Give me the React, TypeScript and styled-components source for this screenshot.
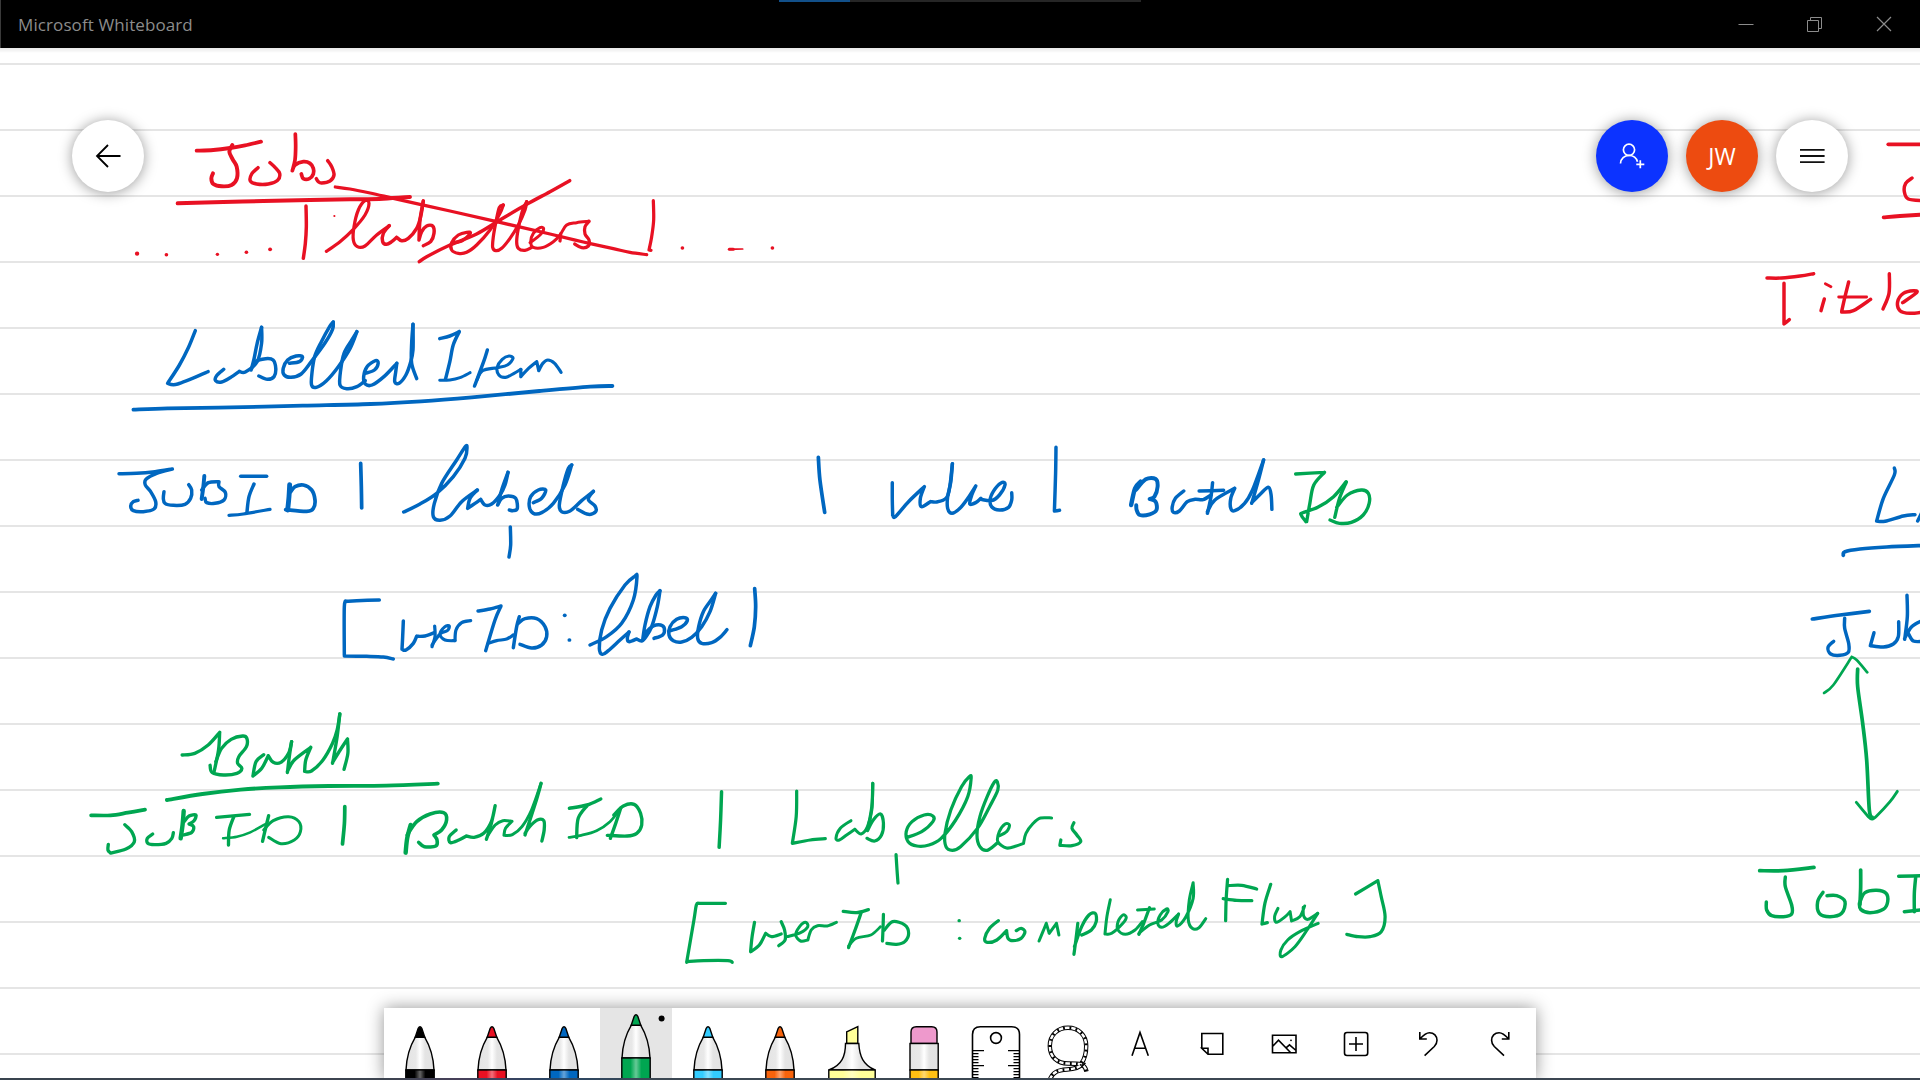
import React from "react";
import styled, { createGlobalStyle } from "styled-components";

const GlobalStyle = createGlobalStyle`
  * { box-sizing: border-box; }
  html, body { margin: 0; padding: 0; background: #fff; overflow: hidden; }
`;

const Window = styled.div`
  position: relative;
  display: flex;
  flex-direction: column;
  width: 1920px;
  height: 1080px;
  overflow: hidden;
  background: #fff;
  font-family: "Open Sans", "Noto Sans", sans-serif;
`;

const TitleBar = styled.header`
  display: flex;
  flex: 0 0 48px;
  align-items: center;
  justify-content: space-between;
  padding: 0 2px 0 17px;
  background: #000;
  border-left: 1px solid #3a3a3a;
  color: #8c8c8c;
`;

const Title = styled.span`
  padding-top: 1px;
  font-size: 17px;
  letter-spacing: 0.1px;
  line-height: 47px;
  white-space: nowrap;
`;

const Progress = styled.div`
  position: absolute;
  top: 0;
  left: 779px;
  width: 362px;
  height: 2px;
  background: linear-gradient(90deg, #12508a 0 71px, #262626 71px 100%);
`;

const WindowControls = styled.div`
  display: flex;
`;

const ControlButton = styled.button`
  display: flex;
  align-items: center;
  justify-content: center;
  width: 69px;
  height: 48px;
  padding: 0;
  border: 0;
  background: transparent;
  color: #8c8c8c;
`;

const Board = styled.main`
  position: relative;
  display: flex;
  flex: 1;
  flex-direction: column;
  justify-content: space-between;
  background:
    linear-gradient(180deg, rgba(0, 0, 0, 0.09), transparent) 0 0 / 100% 5px no-repeat,
    repeating-linear-gradient(180deg, transparent 0 15px, #e5e5e5 15px 17px, transparent 17px 66px);
`;

const Ink = styled.svg`
  position: absolute;
  left: 0;
  top: -48px;
  width: 1920px;
  height: 1080px;
  fill: none;
  stroke-linecap: round;
  stroke-linejoin: round;
`;

const FloatingRow = styled.div`
  position: relative;
  display: flex;
  justify-content: space-between;
  padding: 72px 72px 0;
`;

const ButtonGroup = styled.div`
  display: flex;
  gap: 18px;
`;

const RoundButton = styled.button<{ $bg: string; $fg: string }>`
  display: flex;
  align-items: center;
  justify-content: center;
  width: 72px;
  height: 72px;
  padding: 0;
  border: 0;
  border-radius: 50%;
  background: ${(p) => p.$bg};
  color: ${(p) => p.$fg};
  box-shadow: 0 1px 14px rgba(0, 0, 0, 0.4);
  font: 500 23px "Open Sans", "Noto Sans", sans-serif;
`;

const Toolbar = styled.div`
  position: relative;
  display: flex;
  align-self: flex-start;
  margin-left: 384px;
  height: 72px;
  background: #fff;
  box-shadow: 0 0 16px rgba(0, 0, 0, 0.42);
`;

const Tool = styled.button<{ $active?: boolean }>`
  width: 72px;
  height: 72px;
  padding: 0;
  border: 0;
  background: ${(p) => (p.$active ? "#e5e5e5" : "transparent")};
`;

const ToolIcon = styled.svg<{ $weight?: number }>`
  display: block;
  width: 72px;
  height: 72px;
  fill: none;
  stroke: #000;
  stroke-width: ${(p) => p.$weight ?? 1.6};
`;

const ScreenEdge = styled.div`
  position: absolute;
  left: 0;
  bottom: 0;
  width: 100%;
  height: 2px;
  background: linear-gradient(90deg, #39444f 0, #3d4450 20%, #47405a 24%, #2a4766 29%, #3c4853 34%, #3c4652 100%);
`;

const RED = "#e81123";
const BLUE = "#0067c0";
const GREEN = "#00a651";

type Stroke = [string, number?];
interface Note {
  color: string;
  x: number;
  y: number;
  sx: number;
  sy: number;
  width: number;
  strokes: Stroke[];
}

const K = 1568;
const PEN_PRESSURE = 1.16;

const notes: Note[] = [
  {
    color: RED, x: 50, y: 100, sx: 3, sy: 3, width: 3,
    strokes: [
      ["440,152 490,150 540,144 585,136 633,125", 3.3],
      ["547,135 538,155 548,178 560,200 561,235 545,255 515,259 490,252 484,235 489,220", 3.4],
      ["624,203 605,222 601,243 620,252 655,252 683,241 689,220 675,202 660,188", 3],
      ["736,102 737,140 735,180 727,212; 727,212 735,195 760,185 780,190 790,205 790,222 778,236 760,236 754,222", 3.2],
      ["833,182 845,200 852,225 840,243 815,249 805,245 799,236", 3],
      ["856,261 900,267 960,279 1030,295 1110,313 1200,333 1340,365 1500,402 1600,426 1690,446 1740,457 1790,464", 2.8],
      ["383,310 520,306 640,303 780,300 900,298 1000,296 1080,291", 3.4],
      ["768,318 769,380 766,430 760,475", 3],
      ["261,461 261.5,461", 3.6], ["349,464 349.5,464", 3], ["502,463 502.5,463", 2.8], ["589,457 589.5,457", 3], ["660,448 660.5,448", 3.2], ["853,348 853.3,348", 1.8],
      ["829,454 870,425 910,388 945,345 957,310 945,302 925,330 912,380 910,420 922,440 945,438 980,405 1018,377", 2.8],
      ["1018,377 1000,400 998,425 1010,433 1025,425 1040,412; 1040,412 1055,422 1075,415 1100,385 1112,350 1120,303"],
      ["1120,303 1110,360 1107,420; 1107,420 1115,395 1130,378 1148,378 1152,400 1142,425 1120,437"],
    ],
  },
  {
    color: RED, x: 400, y: 160, sx: 3, sy: 3, width: 2.8,
    strokes: [
      ["155,248 185,243 211,220 200,217 175,225 155,248 155,270 175,280 200,277 230,255 270,210 300,160 310,135"],
      ["310,135 298,142 288,185 280,230 278,262 288,272 305,265 330,235 355,195 375,150 380,125"],
      ["380,125 368,150 355,205 350,245 355,265 375,271 395,262"],
      ["390,248 420,225 431,206 420,203 400,220 392,245 400,262 430,262 460,245 480,225 500,195 530,188 567,184", 2.6],
      ["480,243 482,222"],
      ["567,184 555,200 555,222 567,240 565,258 545,263 524,252"],
      ["58,305 80,290 150,255 230,222 300,180 380,133 450,95 509,62", 3],
      ["760,122 761,180 755,230 747,270; 747,270 753,271"],
      ["847,264 847.5,264", 3], ["1117,264 1117.5,264", 3], ["988,268 1028,267", 1.5], ["988,268 1000,268", 2.6],
    ],
  },
  {
    color: BLUE, x: 100, y: 310, sx: K / 530, sy: 3, width: 3,
    strokes: [
      ["282,62 262,112 235,165 200,220; 200,220 230,222 320,185"],
      ["366,178 345,197 342,212 360,216 385,203 412,184; 412,184 430,186 465,155 478,100 478,52"],
      ["478,52 465,100 455,150 447,180; 447,180 460,155 490,146 512,150 520,175 515,200 495,208 470,198"],
      ["560,160 590,155 599,140 580,138 555,150 542,175 545,195 565,202 595,192 625,155 665,100 688,58 690,36"],
      ["690,36 678,52 655,95 635,140 627,190 626,225 640,232 670,212 705,170 740,115 760,65"],
      ["760,65 745,90 722,130 712,180 710,225 730,236 760,230 785,212"],
      ["785,190 812,180 823,160 815,152 790,170 780,200 785,222 805,225 840,200 878,160"],
      ["878,160 875,185 872,215 885,220 905,195 918,160 926,120 926,43"],
      ["926,43 922,100 922,160 937,206"],
      ["1005,86 1035,78 1063,65; 1063,65 1045,105 1035,155 1022,208"],
      ["1005,211 1035,210 1065,203 1095,188", 2.6],
      ["1146,120 1135,155 1108,228"],
      ["1115,210 1132,182 1175,173 1205,165 1222,145 1210,138 1190,148 1175,172 1180,195 1200,202 1225,190 1245,178", 2.7],
      ["1245,178 1245,200; 1245,200 1265,178 1292,155; 1292,155 1298,182; 1298,182 1310,160 1325,150 1345,160 1364,187", 2.8],
      ["99,299 200,295 350,293 600,287 800,282 950,274 1100,262 1300,243 1450,230 1516,228", 3.3],
    ],
  },
  {
    color: BLUE, x: 100, y: 430, sx: 3, sy: 3, width: 3,
    strokes: [
      ["57,131 110,130 165,125 217,117; 217,117 170,130 138,148 136,165 152,185 167,215 162,237 130,245 100,242 92,228 100,215 114,211"],
      ["192,185 190,205 195,220 220,226 255,223 272,205 275,180 266,164"],
      ["313,138 310,170 305,207", 3.4],
      ["305,180 325,158 357,155; 357,155 357,170 376,187 372,210 345,220 320,218 315,205"],
      ["422,139 500,139"], ["462,162 447,200 441,245"], ["387,256 430,252 510,238", 2.8],
      ["569,164 567,200 563,240", 4.2], ["572,185 585,170 610,165 635,180 645,210 640,235 620,244 557,239", 3.2],
      ["782,100 784,170 785,234", 3.2],
      ["911,246 960,222 1010,190 1060,140 1095,85 1101,52 1096,50 1070,90 1025,160 1003,220 1000,260 1020,271 1050,258 1085,215 1132,180"],
      ["1132,180 1110,205 1103,235; 1103,235 1125,220 1142,208; 1142,208 1155,225 1175,222 1200,195 1215,165 1224,127"],
      ["1224,127 1205,180 1193,225; 1193,225 1205,205 1225,198 1247,205 1252,235 1240,242 1228,240"],
      ["1300,218 1325,205 1337,180 1315,180 1292,200 1288,230 1300,250 1325,248 1360,220 1395,165 1415,105"],
      ["1415,105 1405,115 1390,165 1378,225 1385,245 1410,243 1445,212 1480,184"],
      ["1480,184 1465,208 1485,228 1487,245 1465,253 1433,238"],
      ["1231,291 1232,345 1227,381"],
      ["838,510 770,512 740,514; 740,514 733,530 733,676; 733,678 800,679 850,681 880,687"],
      ["910,573 908,620 906,658; 906,658 918,660 940,640 950,619; 950,619 975,618 1003,608"],
      ["1004,588 1005,620 996,650", 2.8], ["996,645 1020,612 1042,602 1048,588 1035,590 1020,612 1035,630 1065,632", 2.7],
      ["1065,632 1068,600 1085,578 1112,572", 2.8],
      ["1134,543 1170,537 1203,528; 1203,528 1185,570 1157,662"], ["1165,640 1190,632 1220,627 1240,615", 2.8],
      ["1258,560 1250,590 1240,653"], ["1255,580 1275,566 1310,566 1335,590 1340,620 1325,645 1295,654 1260,643"],
      ["1394,556 1394.5,556", 3.2], ["1408,630 1408.5,630", 3.2],
    ],
  },
  {
    color: BLUE, x: 570, y: 560, sx: 3, sy: 3, width: 3,
    strokes: [
      ["60,255 110,230 155,190 190,120 201,50 194,49 165,75 120,145 95,210 88,265 97,283 115,272 150,240 177,216"],
      ["177,216 172,235 178,245 200,237; 200,237 215,243 228,230 245,200 262,140 270,92"],
      ["270,92 258,105 240,140 225,195 218,240; 218,240 230,215 250,198 272,195 283,205 278,225 252,235"],
      ["302,212 335,200 352,182 345,173 320,178 300,200 297,225 310,242 335,246 365,232 395,200 420,155 437,100"],
      ["437,100 425,118 400,155 386,200 383,235 395,250 425,248 450,232 471,209"],
      ["554,86 557,140 553,200 541,257", 3.2],
    ],
  },
  {
    color: BLUE, x: 780, y: 430, sx: K / 620, sy: 3, width: 3,
    strokes: [
      ["97,82 101,150 113,247", 3.2],
      ["284,158 284,210 285,255; 285,255 292,260 325,215 365,170; 365,170 355,205 358,230 380,215; 380,215 400,215 425,195 436,101"],
      ["436,101 432,155 424,200 424,235 435,250 455,235 475,205 495,168; 495,168 485,195 480,222 495,218 508,205"],
      ["508,208 535,212 555,195 569,165 562,157 545,175 532,205 535,230 555,240 578,232 586,210 586,188"],
      ["698,52 697,130 694,243; 694,243 707,241"],
      ["912,155 898,175 888,225", 3.8], ["900,180 925,148 950,147 955,170 947,200 935,207; 935,207 950,215 952,240 935,253 910,255 902,240 901,226", 3.4],
      ["1021,183 1000,205 992,230 995,247 1010,243 1030,215 1050,208 1070,209 1090,195"],
      ["1094,158 1090,200 1081,250"], ["1060,183 1122,181"], ["1081,245 1100,210 1150,175; 1150,175 1140,205 1140,235 1150,242 1175,220 1195,180 1223,90"],
      ["1223,90 1210,150 1193,220; 1193,218 1215,192 1235,172 1242,195 1244,238"],
    ],
  },
  {
    color: GREEN, x: 780, y: 430, sx: K / 620, sy: 3, width: 2.9,
    strokes: [
      ["1304,132 1377,127; 1377,127 1350,165 1340,220 1332,275; 1330,275 1318,255 1322,248 1360,232 1400,200 1432,155"],
      ["1432,157 1415,205 1403,262; 1408,232 1435,195 1470,180 1488,190 1490,220 1475,255 1445,277 1415,280 1391,270"],
    ],
  },
  {
    color: GREEN, x: 80, y: 700, sx: K / 600, sy: 3, width: 2.9,
    strokes: [
      ["267,165 300,160 335,135 365,97; 365,97 362,150 350,217"],
      ["340,196 345,217 375,225 410,220 423,205 412,190 415,170 435,140 436,115 425,108 395,118 370,145 355,185"],
      ["480,164 460,185 452,228; 452,228 475,205 492,167; 492,167 505,187 525,187 545,160 553,125"],
      ["553,125 547,170 542,218; 542,214 560,180 603,142; 603,142 590,180 587,214; 587,214 605,213 635,180 660,130 672,90 679,42"],
      ["679,42 672,110 660,190; 660,187 680,150 699,117; 699,117 700,160 690,208"],
      ["227,300 320,282 420,269 520,262 650,258 800,257 935,251", 3.3],
      ["29,346 80,346 125,338 170,329", 3.2],
      ["117,374 135,395 142,425 120,447 80,459; 80,459 73,450 74,433"],
      ["190,402 176,415 177,430 195,434 225,430 240,415 244,398"],
      ["271,333 268,375 263,415", 3.8], ["272,365 285,348 303,345 298,362 285,372; 285,372 297,380 292,397 270,405"],
      ["357,352 443,343"], ["402,350 390,390 388,435"], ["374,415 410,410 445,397 485,372", 2.2],
      ["493,347 485,385 477,424"], ["480,390 505,362 545,350 572,365 576,395 560,420 525,431 493,412", 2.6],
      ["692,320 691,370 686,432", 3.2],
      ["864,375 855,415 851,458", 3.8], ["855,405 880,365 915,342 950,338 958,360 945,390 925,405; 925,405 933,420 930,438 900,440 885,427", 3.1],
      ["983,390 965,410 968,428 990,420 1010,408; 1010,408 1030,412 1055,400 1075,365 1085,317; 1085,317 1075,370 1062,418"],
      ["1065,408 1085,375 1105,362 1129,364; 1129,364 1112,385 1108,406; 1108,406 1130,404 1155,380 1180,330 1205,250", 2.6],
      ["1205,250 1190,310 1163,405; 1163,400 1175,380 1195,360 1212,362 1213,390 1207,423"],
      ["1279,325 1325,315 1361,297", 3], ["1325,317 1302,355 1298,413"], ["1278,412 1310,406 1350,392 1385,365 1413,325", 2.4],
      ["1413,325 1400,370 1386,415"], ["1395,345 1420,318 1448,313 1465,340 1468,375 1455,400 1430,408 1378,406"],
    ],
  },
  {
    color: GREEN, x: 660, y: 760, sx: K / 760, sy: 3, width: 2.8,
    strokes: [
      ["127,95 125,180 122,262", 3],
      ["282,93 281,170 273,250; 273,250 310,240 341,236"],
      ["394,182 372,205 363,235 370,240 385,225 402,208; 402,208 415,222 428,200 437,150 439,70", 2.6],
      ["439,70 437,140 428,212; 428,212 440,180 455,162 461,190 457,225 443,243 427,235"],
      ["508,233 540,215 563,185 563,168 545,165 520,185 508,215 512,245 530,258 555,255 580,235 610,180 635,110 642,54 638,50 622,80 600,150 588,220 590,260 603,271 620,260 655,205 680,140 697,90 696,66 690,66 675,110 660,170 654,225 660,260 675,271 695,250"],
      ["697,230 715,215 721,195 712,192 700,215 697,245 715,264 735,258 750,250; 750,250 755,220 770,190 785,174 808,174", 2.6],
      ["854,188 850,205 860,225 868,245 850,257 825,256; 825,256 827,240"],
      ["487,284 489,330 491,369"],
      ["135,430 80,430; 80,430 75,435 70,480 55,607; 55,605 90,602 140,602 149,607"],
      ["195,487 190,530 187,572; 187,575 205,555 218,520; 218,520 230,530 250,522"],
      ["250,485 257,510 258,540 245,557"],
      ["262,530 290,518 305,500 300,487 288,500 280,525 290,543 305,540; 305,540 312,510 325,497 345,498 364,487", 2.6],
      ["378,454 405,458 430,449"], ["415,458 405,500 389,563"], ["389,558 405,535 435,525 455,500", 2.4],
      ["461,463 460,510 459,543"], ["463,510 480,485 505,495 513,520 505,545 488,553 468,550"],
      ["617,482 617.5,482", 2.8], ["618,535 618.5,535", 2.8],
      ["698,482 680,505 670,535 675,547 695,540 715,512; 715,512 718,535 728,542 745,535 753,515 745,505 735,512"],
      ["782,543 790,515 797,490; 797,490 803,520; 803,520 818,490; 818,490 823,525", 2.6],
      ["862,490 858,540 854,583; 855,560 870,500 885,465 898,460 900,485 890,510 870,525"],
      ["929,419 922,470 918,522; 918,522 932,520 955,490 962,472 955,465 945,485 945,510 960,523 980,510 995,485", 2.6],
      ["1010,443 998,490 988,523"], ["985,450 1020,447", 2.4],
      ["988,520 1010,495 1035,480 1048,455 1045,447 1032,465 1027,490 1035,502 1050,490 1070,462", 2.6],
      ["1070,462 1065,485 1068,498 1085,470 1100,415 1100,368; 1100,368 1092,420 1090,480 1098,505 1112,503 1126,476", 2.6],
      ["1171,358 1168,420 1167,482"], ["1171,377 1200,376 1231,387"], ["1162,416 1190,421 1221,422"],
      ["1260,373 1248,430 1242,492; 1242,492 1253,488"],
      ["1275,445 1268,470 1272,487 1290,470 1300,455; 1300,455 1303,483; 1303,483 1320,470 1330,438; 1327,442 1328,468 1337,478 1357,460", 2.6],
      ["1357,460 1335,510 1310,560 1283,590 1281,570 1295,540 1320,515 1358,490", 2.6],
      ["1435,402 1481,362; 1481,362 1488,410 1496,470 1488,515 1465,530 1440,530 1417,523"],
    ],
  },
  {
    color: RED, x: 1560, y: 100, sx: 3, sy: 3, width: 3,
    strokes: [
      ["985,133 1100,133", 3.3], ["1056,234 1037,250 1033,275 1045,297 1090,302"], ["971,352 1020,348 1100,343", 3.3],
      ["621,534 665,534 720,528 761,521"], ["672,550 672,610 672,670; 672,672 688,659"],
      ["793,597 783,632"], ["796,551 813,560", 2.4],
      ["866,546 855,590 845,634; 845,636 880,632 932,598"], ["836,591 920,591", 2.4],
      ["988,521 987,580 969,627"],
      ["1028,608 1070,578 1060,572 1030,580 1013,605 1020,632 1050,640 1090,636"],
    ],
  },
  {
    color: BLUE, x: 1740, y: 440, sx: 3, sy: 3, width: 3,
    strokes: [
      ["463,84 463,105 430,175 410,243; 410,243 435,244 490,228 525,224"], ["550,208 533,243"],
      ["310,346 315,335 360,327 440,321 560,316", 3.2],
      ["217,537 300,525 388,514", 3.2], ["314,535 314,565 326,610 325,637 300,646 272,642 264,622 281,604"],
      ["402,578 391,617; 391,617 430,621 460,612 475,590 476,545"],
      ["501,466 502,530 494,598; 494,595 515,560 550,540"], ["505,580 520,603 550,604"],
    ],
  },
  {
    color: GREEN, x: 1740, y: 440, sx: 3, sy: 3, width: 3,
    strokes: [
      ["252,759 280,735 335,651; 335,651 350,660 382,697", 2.3],
      ["353,687 353,740 368,850 380,960 388,1110 397,1132", 3.2],
      ["349,1087 385,1130 397,1137 410,1128 450,1085 472,1054", 2.5],
      ["59,1292 130,1292 222,1282", 3.2], ["136,1311 136,1340 155,1395 155,1422 130,1430 95,1427 80,1410 79,1386"],
      ["249,1357 233,1385 238,1420 270,1430 305,1420 315,1385 290,1367 261,1367"],
      ["362,1290 362,1340 360,1393", 3.2], ["360,1385 375,1358 410,1351 438,1360 443,1385 430,1408 390,1418 362,1408 358,1390"],
      ["476,1309 560,1307"], ["527,1312 523,1360 523,1415"], ["493,1415 560,1408"],
    ],
  },
];

// Runs a smooth curve through the sampled pen positions; ";" marks a sharp turn.
function inkPath(points: string, n: Note): string {
  return points
    .split(";")
    .map((part) => {
      const p = part.trim().split(" ").map((s) => {
        const [a, b] = s.split(",").map(Number);
        return [n.x + a / n.sx, n.y + b / n.sy];
      });
      let d = `M${p[0][0].toFixed(2)} ${p[0][1].toFixed(2)}`;
      for (let i = 0; i < p.length - 1; i++) {
        const p0 = p[Math.max(0, i - 1)];
        const p1 = p[i];
        const p2 = p[i + 1];
        const p3 = p[Math.min(p.length - 1, i + 2)];
        const c = [
          p1[0] + (p2[0] - p0[0]) / 6, p1[1] + (p2[1] - p0[1]) / 6,
          p2[0] - (p3[0] - p1[0]) / 6, p2[1] - (p3[1] - p1[1]) / 6,
          p2[0], p2[1],
        ];
        d += "C" + c.map((v) => v.toFixed(2)).join(" ");
      }
      return d;
    })
    .join("");
}

function Handwriting() {
  return (
    <Ink viewBox="0 0 1920 1080">
      {notes.map((n, i) => (
        <g key={i} stroke={n.color}>
          {n.strokes.map(([pts, w], j) => (
            <path key={j} d={inkPath(pts, n)} strokeWidth={(w ?? n.width) * PEN_PRESSURE} />
          ))}
        </g>
      ))}
    </Ink>
  );
}

function Gradients() {
  return (
    <defs>
      <linearGradient id="barrel">
        <stop offset="0" stopColor="#e4e4e4" />
        <stop offset="0.35" stopColor="#e8e8e8" />
        <stop offset="0.5" stopColor="#fff" />
        <stop offset="0.68" stopColor="#e4e4e4" />
        <stop offset="1" stopColor="#e2e2e2" />
      </linearGradient>
      <linearGradient id="shine">
        <stop offset="0.3" stopColor="#fff" stopOpacity="0" />
        <stop offset="0.5" stopColor="#fff" stopOpacity="0.4" />
        <stop offset="0.7" stopColor="#fff" stopOpacity="0" />
      </linearGradient>
    </defs>
  );
}

function Pen({ color, active }: { color: string; active?: boolean }) {
  return (
    <Tool $active={active}>
      <ToolIcon viewBox="0 0 72 72">
        <Gradients />
        <g transform={active ? "translate(0 -12)" : undefined} strokeWidth="1.4">
          <path d="M31.2 29.3C26 38 22.5 50 22 62H50C49.5 50 46 38 40.8 29.3Z" fill="url(#barrel)" />
          <path d="M31.2 29.3L34.2 20.4Q36 17.2 37.8 20.4L40.8 29.3Z" fill={color} />
          <rect x="21.8" y="62" width="28.4" height="30" fill={color} />
          <rect x="22.4" y="62.6" width="27.2" height="29" fill="url(#shine)" stroke="none" />
        </g>
        {active && <circle cx="61.6" cy="10.6" r="3" fill="#000" stroke="none" />}
      </ToolIcon>
    </Tool>
  );
}

function Ruler() {
  const ticks = [0, 1, 2, 3, 4, 5, 6, 7, 8, 9];
  return (
    <ToolIcon viewBox="0 0 72 72">
      <path d="M12.5 74V26.5Q12.5 18.7 20.3 18.7H51.7Q59.5 18.7 59.5 26.5V74" />
      <circle cx="36" cy="30" r="5.4" />
      {ticks.map((t) => {
        const y = 42.6 + t * 3;
        const len = t % 5 === 0 ? 11 : 5.5;
        return <path key={t} strokeWidth="1.3" d={`M13 ${y}h${len}M59 ${y}h${-len}`} />;
      })}
    </ToolIcon>
  );
}

function Lasso() {
  const rope = "M49.6 55C53 50.5 54.2 44 54.2 38C54.2 27 46.5 19.800 36 19.800C25.500 19.800 17.800 27 17.800 38C17.800 49 25.500 55.500 36 55.500C41 55.500 45 55.500 50 56.500C47 60 42 61 35 61.500C27 62 20 63.500 17.500 73";
  const tail = "M50 57Q53.500 58.500 54.500 63.500";
  return (
    <ToolIcon viewBox="0 0 72 72">
      {[rope, tail].map((d) => (
        <g key={d}>
          <path d={d} strokeWidth="4.4" />
          <path d={d} stroke="#fff" strokeWidth="2.4" />
          <path d={d} strokeWidth="3" strokeDasharray="1.800 4.400" />
        </g>
      ))}
    </ToolIcon>
  );
}

export default function App() {
  return (
    <Window>
      <GlobalStyle />
      <TitleBar>
        <Title>Microsoft Whiteboard</Title>
        <WindowControls>
          <ControlButton>
            <svg width="16" height="16" stroke="currentColor"><path d="M0.500 8.500H15.500" /></svg>
          </ControlButton>
          <ControlButton>
            <svg width="16" height="16" fill="none" stroke="currentColor">
              <path d="M0.500 4.500H11.500V15.500H0.500ZM3.500 4V1.500H14.500V12.500H12" />
            </svg>
          </ControlButton>
          <ControlButton>
            <svg width="16" height="16" stroke="currentColor" strokeWidth="1.2"><path d="M1 1L15 15M15 1L1 15" /></svg>
          </ControlButton>
        </WindowControls>
      </TitleBar>
      <Progress />
      <Board>
        <Handwriting />
        <FloatingRow>
          <RoundButton $bg="#fff" $fg="#000">
            <svg width="72" height="72" fill="none" stroke="currentColor" strokeWidth="1.8">
              <path d="M48.500 36H24.500M36 25L25 36L36 47" />
            </svg>
          </RoundButton>
          <ButtonGroup>
            <RoundButton $bg="#0c33ff" $fg="#fff">
              <svg width="72" height="72" fill="none" stroke="currentColor" strokeWidth="1.7">
                <circle cx="33" cy="29.800" r="5.600" />
                <path d="M24.500 43.500C24.700 38.500 28.500 35.500 33 35.500C37 35.500 40.500 37.800 41.500 41.800M44.300 40.300V48.300M40.300 44.300H48.300" />
              </svg>
            </RoundButton>
            <RoundButton $bg="#ed4b10" $fg="#fff">JW</RoundButton>
            <RoundButton $bg="#fff" $fg="#111">
              <svg width="72" height="72" stroke="currentColor" strokeWidth="1.800">
                <path d="M24 29.800H48.600M24 36H48.600M24 42.200H48.600" />
              </svg>
            </RoundButton>
          </ButtonGroup>
        </FloatingRow>
        <Toolbar>
          <Pen color="#000" />
          <Pen color="#e81123" />
          <Pen color="#0067c0" />
          <Pen color="#00a651" active />
          <Pen color="#33ccff" />
          <Pen color="#f7630c" />
          <Tool>
            <ToolIcon viewBox="0 0 72 72" $weight={1.4}>
              <path d="M30.700 23.800L41.800 18.600V35.500H30.700Z" fill="#ffff99" />
              <path d="M29.500 35.500C29.500 48 26 57 12.800 62H59.200C47 57 43.500 48 42.800 35.500Z" fill="url(#barrel)" />
              <rect x="12.800" y="62" width="46.400" height="20" fill="#ffff99" />
              <rect x="13.400" y="62.600" width="45.200" height="19" fill="url(#shine)" stroke="none" />
            </ToolIcon>
          </Tool>
          <Tool>
            <ToolIcon viewBox="0 0 72 72" $weight={1.4}>
              <path d="M23 35.500V24Q23 18.700 28.300 18.700H43.700Q49 18.700 49 24V35.500Z" fill="#ee99cc" />
              <rect x="22" y="35.500" width="28.200" height="26.500" fill="url(#barrel)" />
              <rect x="22" y="62" width="28.200" height="20" fill="#ffc013" />
              <rect x="22.600" y="62.600" width="27" height="19" fill="url(#shine)" stroke="none" />
            </ToolIcon>
          </Tool>
          <Tool><Ruler /></Tool>
          <Tool><Lasso /></Tool>
          <Tool>
            <ToolIcon viewBox="0 0 72 72"><path d="M28 47.800L36 24.500L44.300 47.800M30.800 40.300H41.500" /></ToolIcon>
          </Tool>
          <Tool>
            <ToolIcon viewBox="0 0 72 72">
              <path d="M25.800 40.200V25.500H46.800V46.300H32L25.800 40.200H32V46.300" />
            </ToolIcon>
          </Tool>
          <Tool>
            <ToolIcon viewBox="0 0 72 72">
              <path d="M24.500 27.300H48V44.700H24.500ZM24.500 38.500L30.500 32.200L42.500 44.500M38 39.800L41.500 36.800L48 42.500" />
              <circle cx="43" cy="32.300" r="0.900" fill="#000" stroke="none" />
            </ToolIcon>
          </Tool>
          <Tool>
            <ToolIcon viewBox="0 0 72 72">
              <rect x="24.500" y="24.500" width="23.200" height="23" rx="2.500" />
              <path d="M36 29V43M29 36H43" />
            </ToolIcon>
          </Tool>
          <Tool>
            <ToolIcon viewBox="0 0 72 72">
              <path d="M27.800 24V31H34.800M28.200 30.600C31 27.500 33.500 24.700 37.500 24.700C42 24.700 45 28 45 32.300C45 35 44 36.800 42.300 38.500L32.600 47.700" />
            </ToolIcon>
          </Tool>
          <Tool>
            <ToolIcon viewBox="0 0 72 72">
              <path d="M44.800 24V31H37.800M44.400 30.600C41.600 27.500 39.100 24.700 35.100 24.700C30.600 24.700 27.600 28 27.600 32.300C27.600 35 28.600 36.800 30.300 38.500L40 47.700" />
            </ToolIcon>
          </Tool>
        </Toolbar>
      </Board>
      <ScreenEdge />
    </Window>
  );
}
